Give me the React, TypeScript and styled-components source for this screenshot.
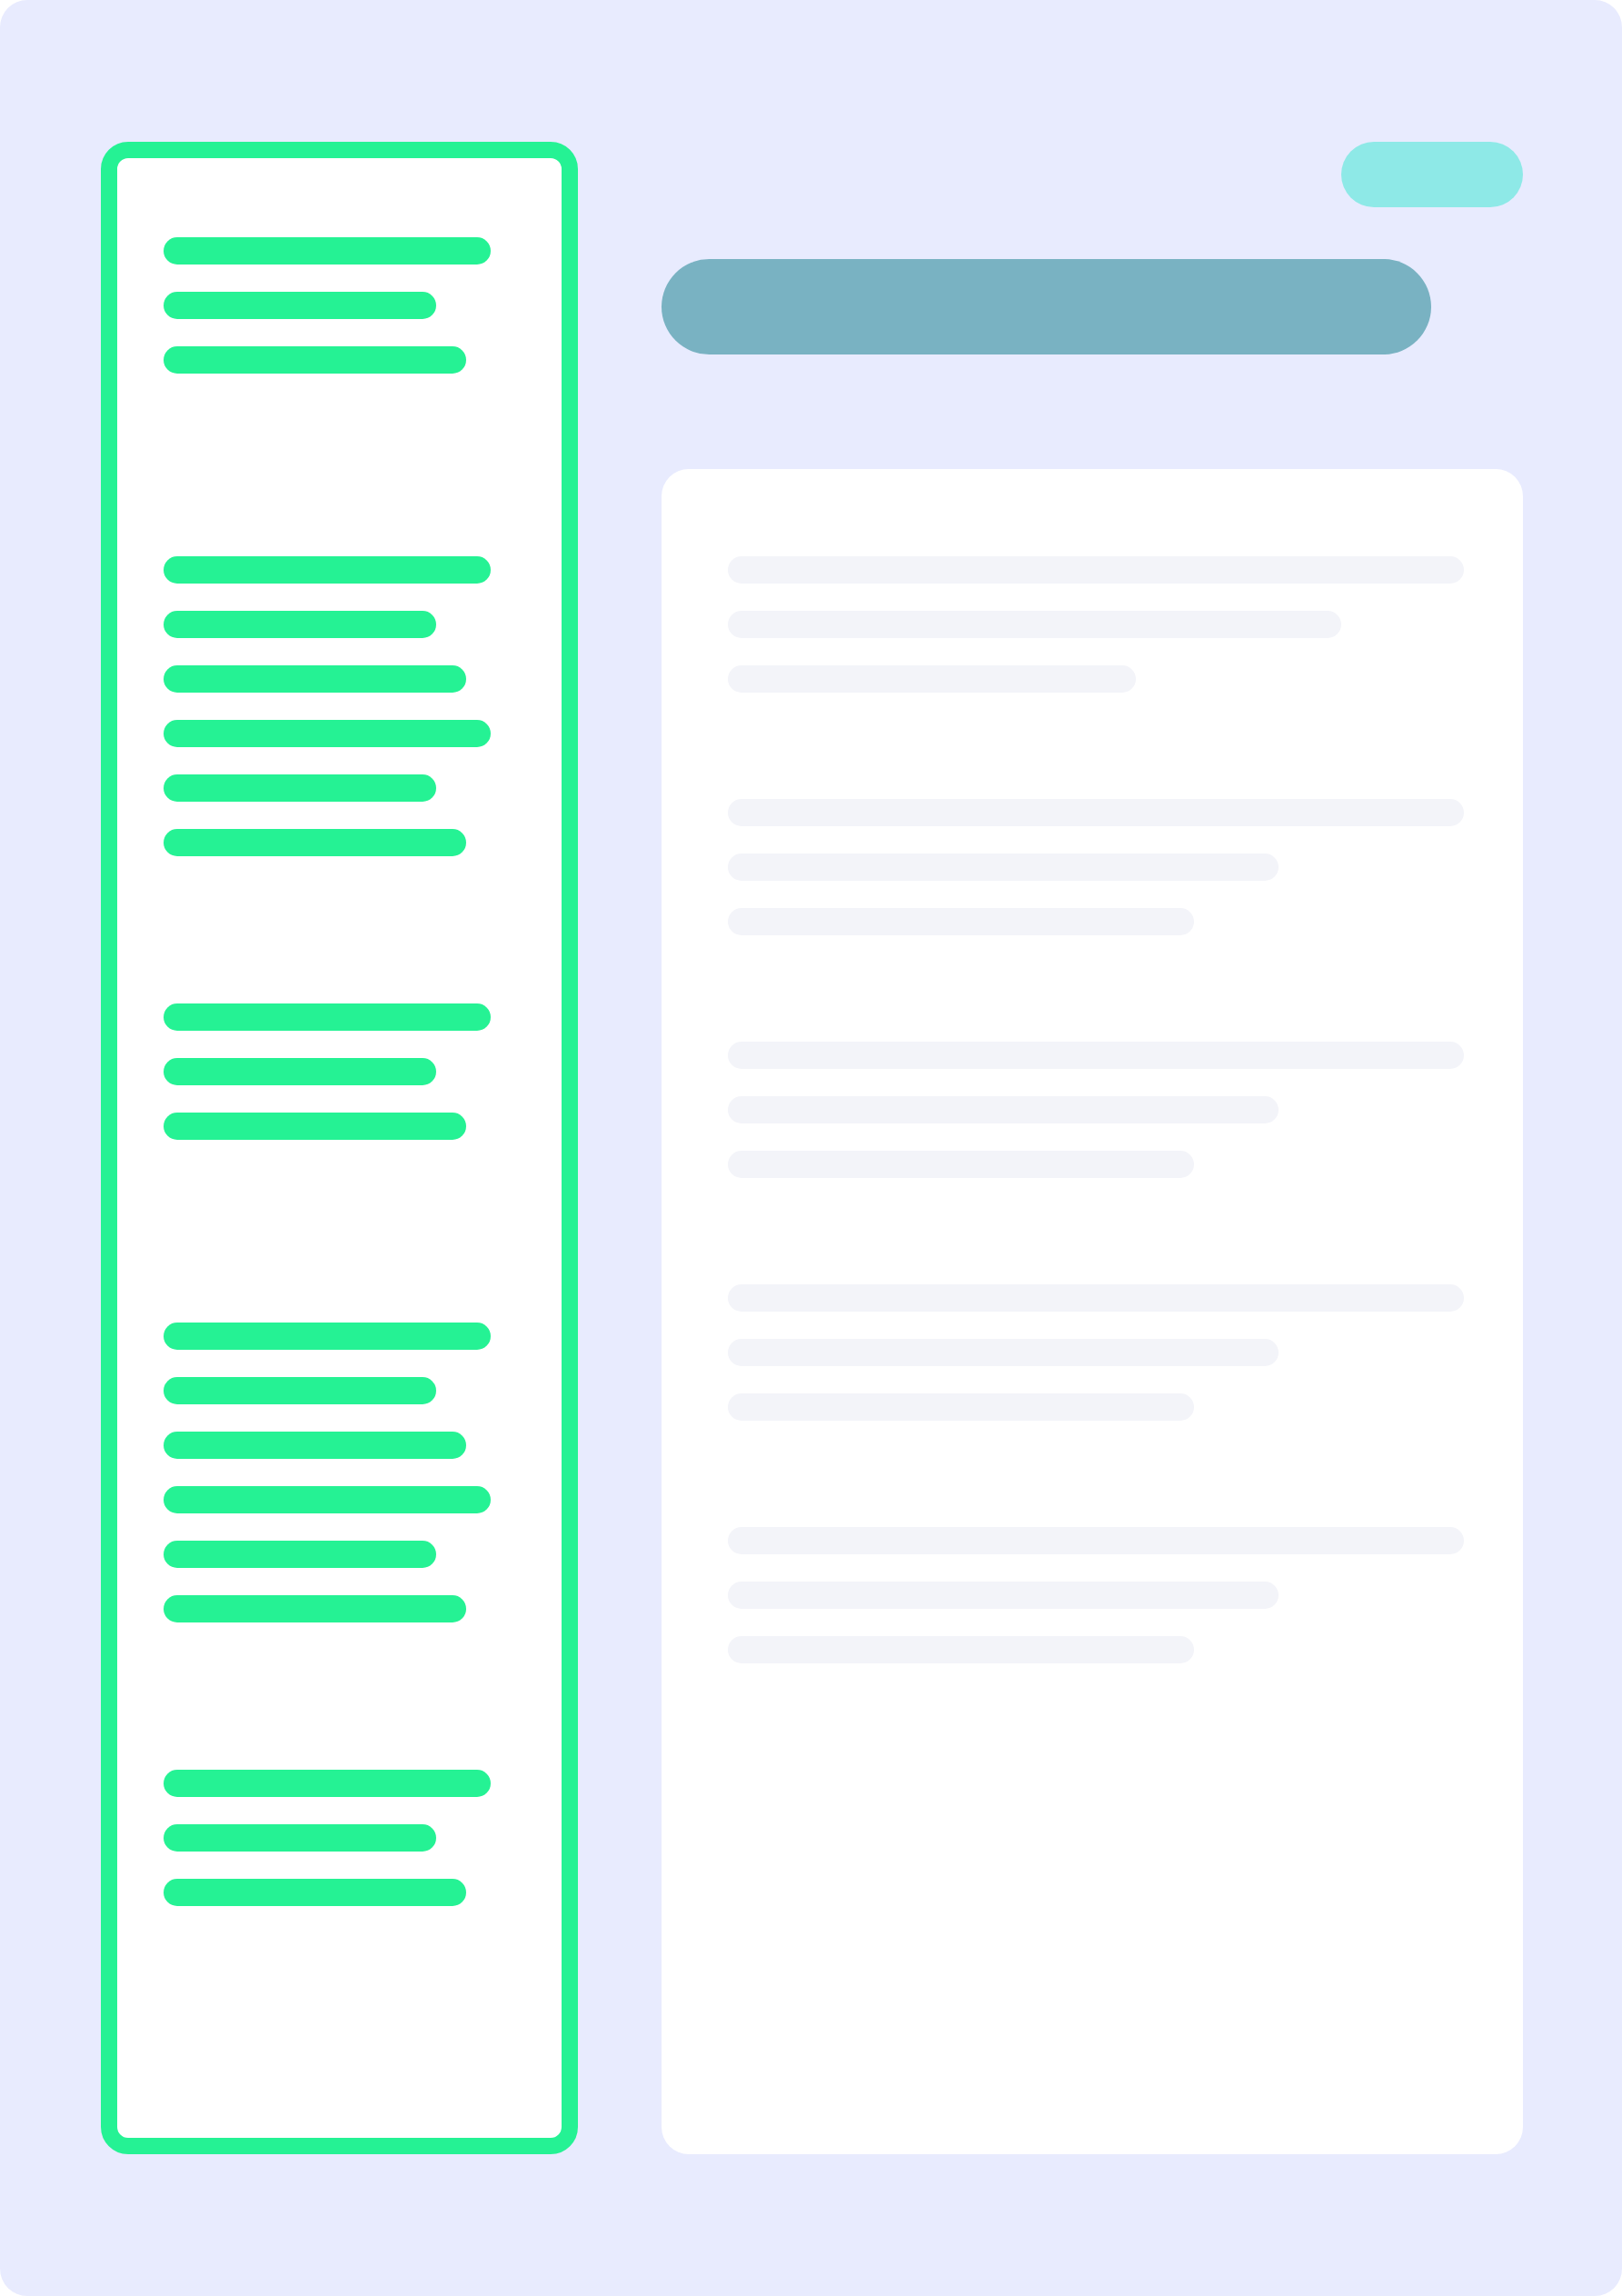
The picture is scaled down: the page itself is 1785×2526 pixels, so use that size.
import React, { FC } from 'react';
import styled, { createGlobalStyle } from 'styled-components';

const GlobalStyle = createGlobalStyle`
  html, body {
    margin: 0;
    padding: 0;
    background: #ffffff;
    font-family: 'Liberation Sans', Arial, sans-serif;
  }
`;

const Page = styled.div`
  box-sizing: border-box;
  width: 1785px;
  height: 2526px;
  border-radius: 30px;
  background-color: #e8ebfe;
  display: flex;
  align-items: flex-start;
  gap: 92px;
  padding: 156px 0 0 111px;
`;

const Sidebar = styled.aside`
  box-sizing: border-box;
  width: 525px;
  height: 2214px;
  border: 18px solid #25f294;
  border-radius: 30px;
  background-color: #ffffff;
  padding: 87px 0 0 51px;
  display: flex;
  flex-direction: column;
`;

interface GroupProps {
  $gap: number;
}

const BarGroup = styled.div<GroupProps>`
  display: flex;
  flex-direction: column;
  gap: 30px;
  margin-bottom: ${(p) => p.$gap}px;
`;

interface BarProps {
  $width: number;
}

const NavBar = styled.div<BarProps>`
  width: ${(p) => p.$width}px;
  height: 30px;
  border-radius: 15px;
  background-color: #25f294;
`;

const Main = styled.main`
  width: 948px;
  height: 2214px;
  display: flex;
  flex-direction: column;
`;

const Toolbar = styled.div`
  display: flex;
  justify-content: flex-end;
`;

const Pill = styled.div`
  width: 200px;
  height: 72px;
  border-radius: 36px;
  background-color: #8ee9e7;
`;

const TitleBar = styled.div`
  width: 847px;
  height: 105px;
  margin-top: 57px;
  border-radius: 52.5px;
  background-color: #79b2c2;
`;

const Card = styled.section`
  box-sizing: border-box;
  flex: 1;
  margin-top: 126px;
  border-radius: 30px;
  background-color: #ffffff;
  padding: 96px 0 0 73px;
  display: flex;
  flex-direction: column;
  gap: 117px;
`;

const LineGroup = styled.div`
  display: flex;
  flex-direction: column;
  gap: 30px;
`;

const Line = styled.div<BarProps>`
  width: ${(p) => p.$width}px;
  height: 30px;
  border-radius: 15px;
  background-color: #f3f4f9;
`;

const navPattern = [360, 300, 333];

const navGroups: { rows: number; gap: number }[] = [
  { rows: 3, gap: 201 },
  { rows: 6, gap: 162 },
  { rows: 3, gap: 201 },
  { rows: 6, gap: 162 },
  { rows: 3, gap: 0 },
];

const cardGroups: number[][] = [
  [810, 675, 449],
  [810, 606, 513],
  [810, 606, 513],
  [810, 606, 513],
  [810, 606, 513],
];

const App: FC = () => {
  return (
    <>
      <GlobalStyle />
      <Page>
        <Sidebar>
          {navGroups.map((g, gi) => (
            <BarGroup key={gi} $gap={g.gap}>
              {Array.from({ length: g.rows }).map((_, i) => (
                <NavBar key={i} $width={navPattern[i % 3]} />
              ))}
            </BarGroup>
          ))}
        </Sidebar>
        <Main>
          <Toolbar>
            <Pill />
          </Toolbar>
          <TitleBar />
          <Card>
            {cardGroups.map((widths, gi) => (
              <LineGroup key={gi}>
                {widths.map((w, i) => (
                  <Line key={i} $width={w} />
                ))}
              </LineGroup>
            ))}
          </Card>
        </Main>
      </Page>
    </>
  );
};

export default App;
